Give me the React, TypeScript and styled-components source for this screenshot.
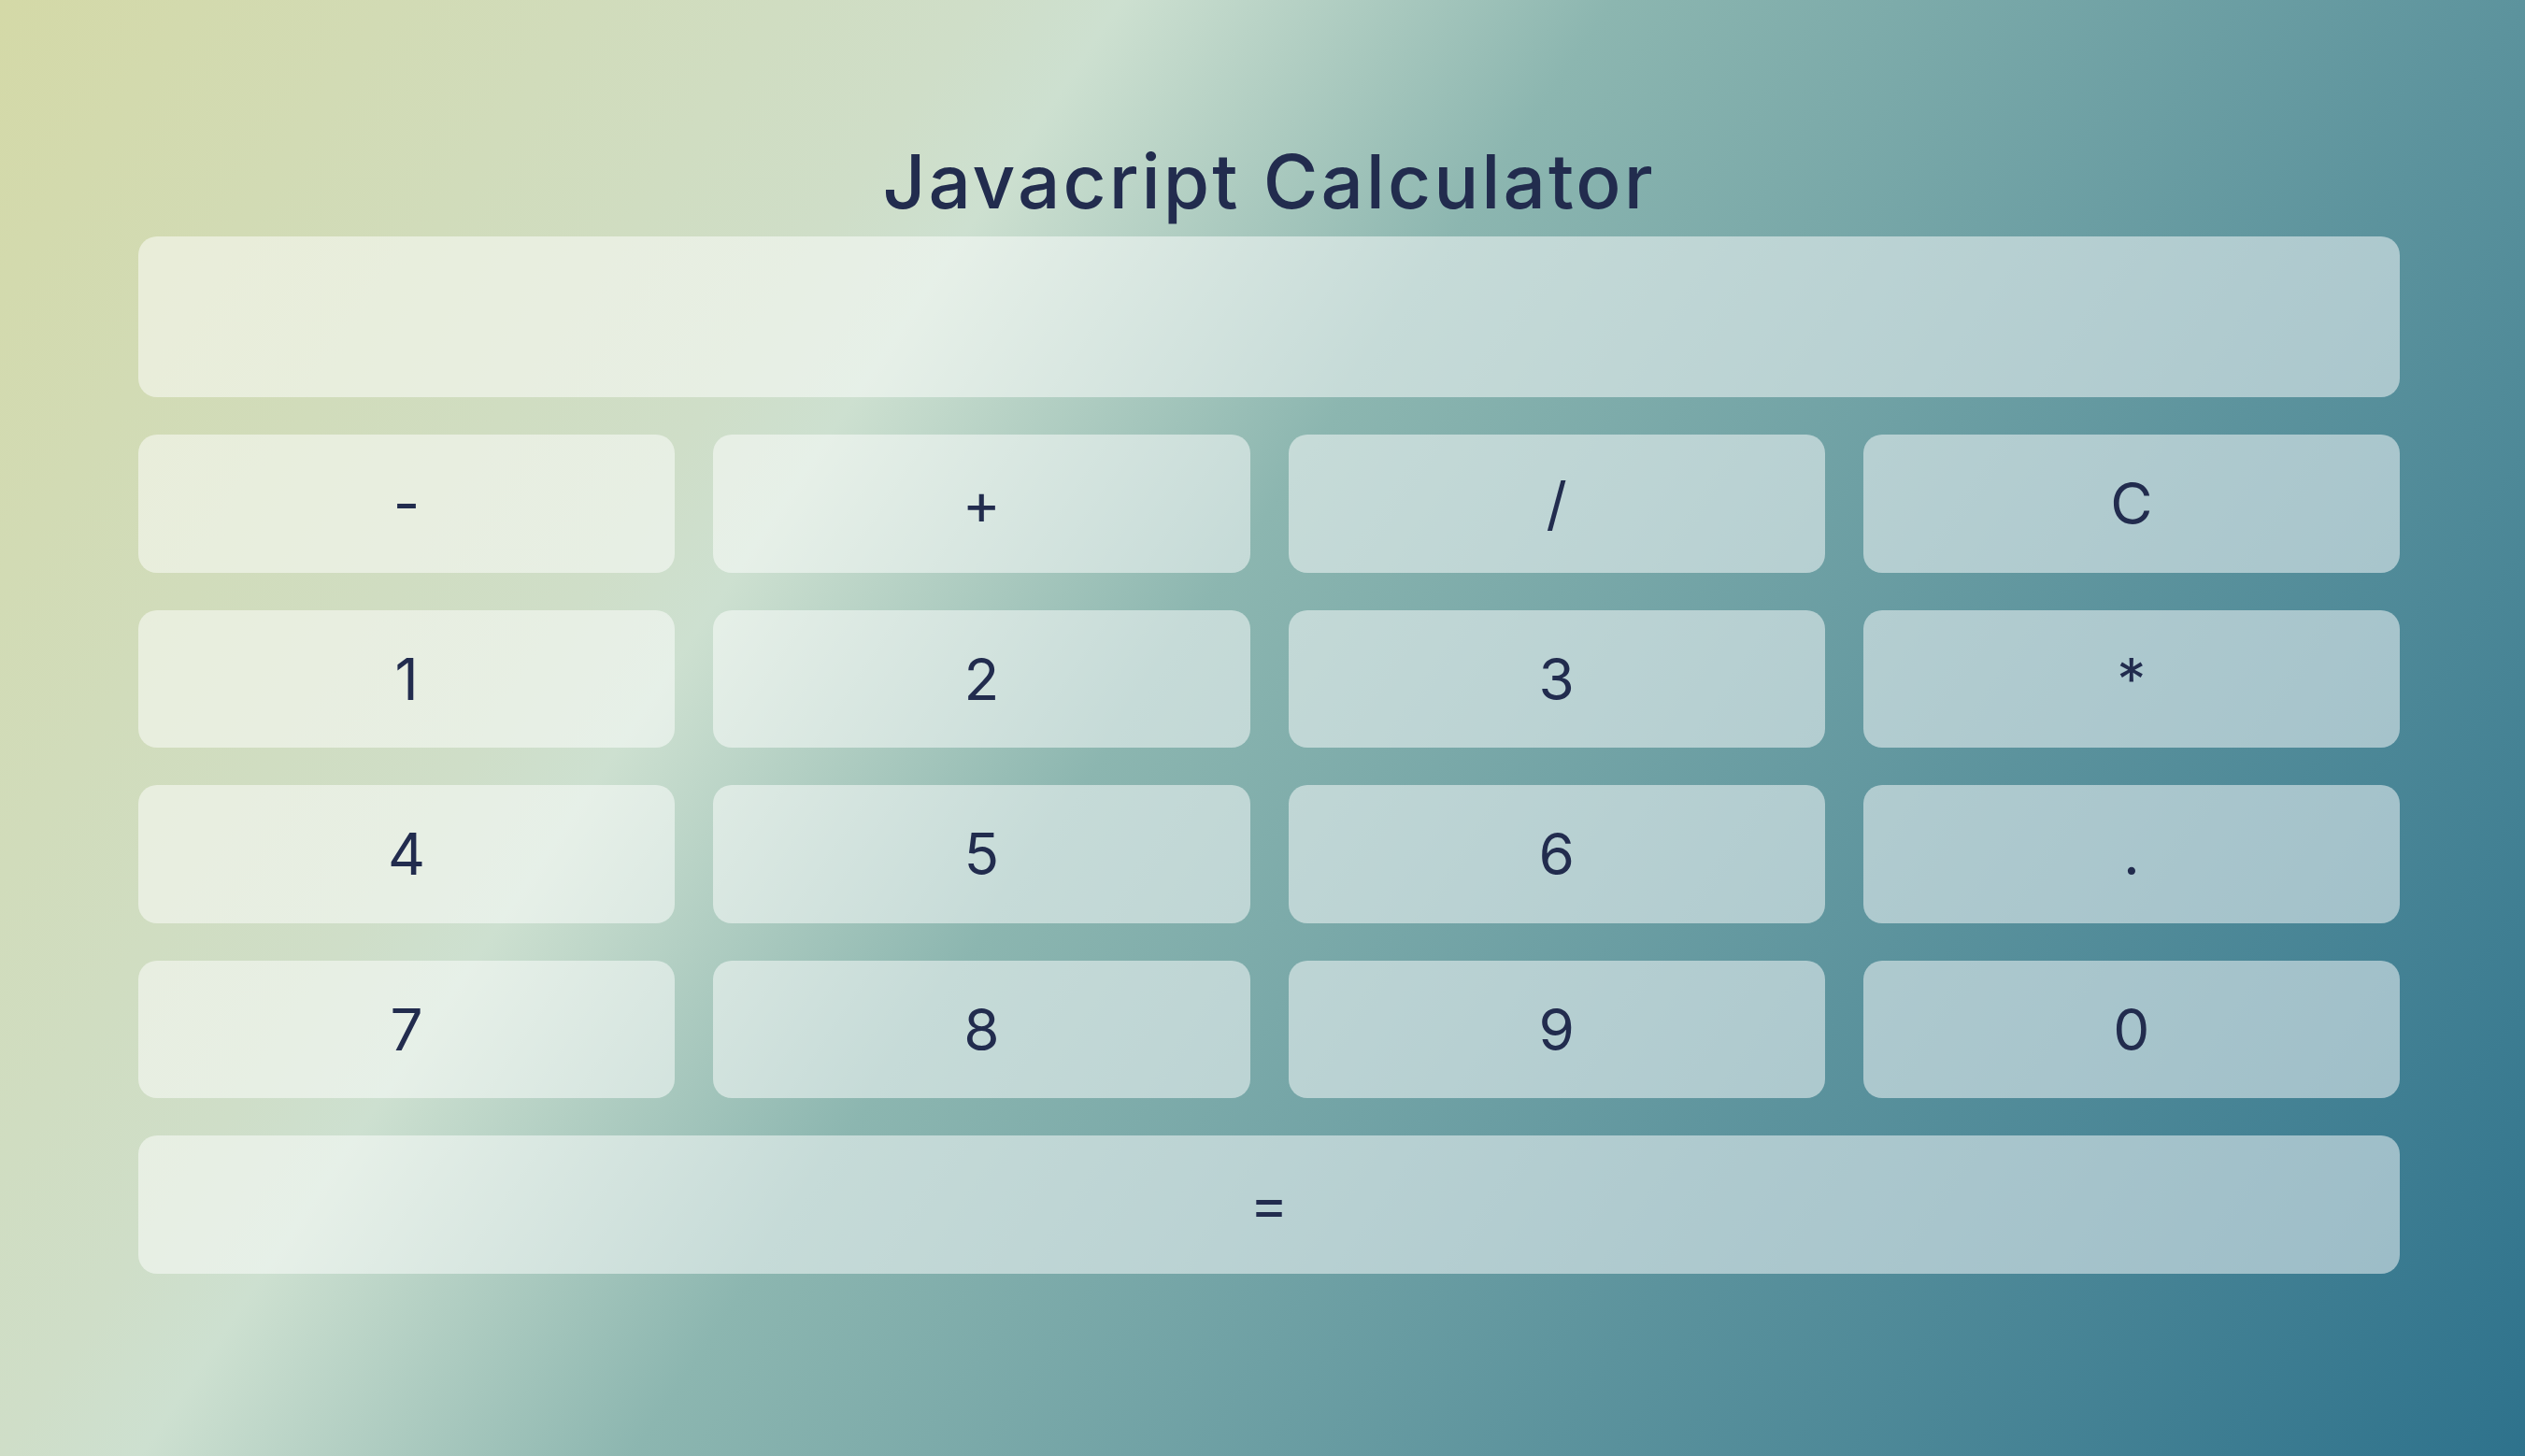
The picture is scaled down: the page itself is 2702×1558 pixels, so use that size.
import React from 'react';
import styled, { createGlobalStyle } from 'styled-components';

const GlobalStyle = createGlobalStyle`
  html, body {
    margin: 0;
    padding: 0;
    overflow: hidden;
  }
  body {
    font-family: Inter, "Noto Sans", sans-serif;
  }
`;

const Page = styled.div`
  height: 100vh;
  overflow: hidden;
  box-sizing: border-box;
  padding: 155px 134px 0 148px;
  background: linear-gradient(
    124deg,
    #d4d9a7 0%,
    #cfdec8 28%,
    #cde0d0 32%,
    #8cb6b0 46%,
    #5c939d 72%,
    #2e728c 100%
  );
`;

const Calculator = styled.div`
  width: 2420px;
  display: flex;
  flex-direction: column;
`;

const Title = styled.h1`
  margin: 0 0 20px;
  font-size: 80px;
  line-height: 78px;
  font-weight: 500;
  text-align: center;
  color: #222c4e;
  letter-spacing: 3px;
`;

const Display = styled.div`
  height: 172px;
  border-radius: 20px;
  background: rgba(255, 255, 255, 0.5);
  margin-bottom: 40px;
`;

const Keys = styled.div`
  display: grid;
  grid-template-columns: repeat(4, 1fr);
  grid-auto-rows: 147.5px;
  gap: 40px 41px;
`;

type KeyProps = {
  $wide?: boolean;
};

const Key = styled.button<KeyProps>`
  grid-column: ${(props) => (props.$wide ? '1 / -1' : 'auto')};
  border: none;
  border-radius: 20px;
  background: rgba(255, 255, 255, 0.5);
  color: #222c4e;
  font-family: Inter, "Noto Sans", sans-serif;
  font-size: 62px;
  font-weight: 400;
  padding: 0;
  cursor: pointer;
`;

const keys = ['-', '+', '/', 'C', '1', '2', '3', '*', '4', '5', '6', '.', '7', '8', '9', '0'];

function App() {
  return (
    <Page>
      <GlobalStyle />
      <Calculator>
        <Title>Javacript Calculator</Title>
        <Display />
        <Keys>
          {keys.map((k) => (
            <Key key={k}>{k}</Key>
          ))}
          <Key $wide>=</Key>
        </Keys>
      </Calculator>
    </Page>
  );
}

export default App;
